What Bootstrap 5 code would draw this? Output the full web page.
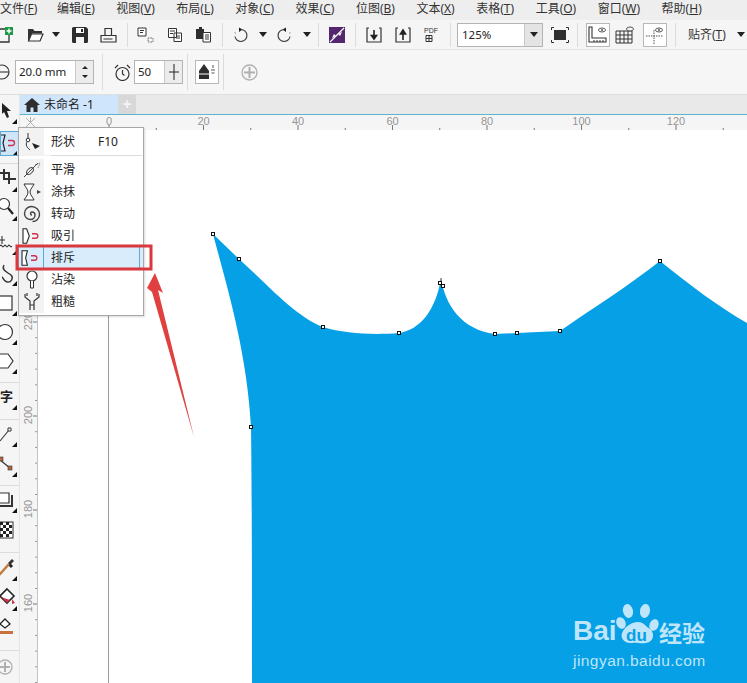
<!DOCTYPE html>
<html lang="zh-CN">
<head>
    <meta charset="UTF-8">
    <title>未命名 -1</title>
    <link href="https://cdn.jsdelivr.net/npm/bootstrap@5.3.0/dist/css/bootstrap.min.css" rel="stylesheet">
    <style>
        html, body { margin: 0; height: 100%; overflow: hidden; }
        body { font-family: "Noto Sans", "Noto Sans CJK SC", sans-serif; color: #222; background: #fff; }
        .app { position: relative; width: 747px; height: 683px; overflow: hidden; }
        .menubar { height: 20px; background: #eeeeee; font-size: 12px; line-height: 18px; gap: 21.5px; padding-left: 0; white-space: nowrap; }
        .menu-item { flex: none; color: #333; }
        .menu-item:first-child { margin-right: -2px; }
        .menu-item u { text-underline-offset: 1px; }
        .bar1 { height: 30px; background: #f5f5f5; border-bottom: 1px solid #e3e3e3; padding-left: 0; }
        .bar2 { height: 45px; background: #f6f6f6; border-bottom: 1px solid #dedede; }
        .ti { width: 29px; height: 24px; flex: none; display: flex; align-items: center; justify-content: center; }
        .ti-new { width: 20px; margin-left: -5px; margin-right: 5px; }
        .ti-open { width: 30px; }
        .tarr { width: 15px; height: 24px; flex: none; display: flex; align-items: center; padding-left: 2px; }
        .tarr-b { padding-left: 4px; }
        .tsep { width: 1px; height: 24px; background: #dcdcdc; margin: 0 3px 0 4px; flex: none; }
        .tsep-tall { height: 36px; }
        .tsep-wide { margin-left: 8px; margin-right: 8px; }
        .combo { width: 86px; height: 24px; border: 1px solid #b4b4b4; background: #fff; font-size: 11.500px; line-height: 22px; padding-left: 4px; margin-left: 3px; margin-right: 8px; position: relative; }
        .combo-btn { position: absolute; right: 0; top: 0; bottom: 0; width: 18px; background: #e4e4e4; border-left: 1px solid #c8c8c8; display: flex; align-items: center; justify-content: center; }
        .boxed { width: 24px; height: 24px; border: 1px solid #b8b8b8; background: #fff; flex: none; display: flex; align-items: center; justify-content: center; }
        .snap { font-size: 12px; margin-left: 9px; width: 49px; white-space: nowrap; color: #333; }
        .field { height: 24px; border: 1px solid #b4b4b4; background: #fff; font-size: 11.500px; line-height: 22px; padding-left: 3px; flex: none; }
        .f-size { width: 79px; margin-left: 5px; position: relative; }
        .f-count { width: 49px; position: relative; margin-left: 3px; }
        .spin { position: absolute; right: 0; top: 0; bottom: 0; width: 18px; background: #ececec; border-left: 1px solid #c8c8c8; display: flex; align-items: center; justify-content: center; }
        .bar2 .circle-ic { margin-left: -6px; flex: none; }
        .plus-ic { margin-left: 14px; flex: none; }
        .stage { height: 588px; }
        .toolbox { width: 20px; flex: none; background: #f5f5f5; border-right: 1px solid #e4e4e4; padding-top: 5px; }
        .tool { height: 29px; width: 19px; flex: none; overflow: hidden; }
        .tool svg { display: block; }
        .tool-on { background: #cfe6f8; outline: 1px solid #5aa9d6; outline-offset: -1px; height: 25px; margin-top: 2px; margin-bottom: 2px; }
        .tool-sep { width: 19px; flex: none; background: linear-gradient(#dcdcdc, #dcdcdc) no-repeat center / 100% 1px; }
        .sp1 { height: 1px; background: none; } .sp2 { height: 2px; background: none; } .sp5 { height: 5px; background: none; }
        .sp7 { height: 7px; } .sp8 { height: 8px; } .sp10 { height: 10px; }
        .work { flex: 1; min-width: 0; }
        .tabs { height: 20px; background: #e9e9e9; border-bottom: 1px solid #5fb3cf; }
        .doc-tab { width: 98px; background: #cfe5fb; font-size: 12px; line-height: 19px; white-space: nowrap; }
        .tab-add { width: 18px; background: #d8d8d8; color: #f4f4f4; font-size: 16px; line-height: 18px; text-align: center; font-weight: 700; }
        .sheet { flex: 1; display: block; }
        .flyout { position: absolute; left: 18px; top: 127px; width: 126px; height: 189px; background: #fff; border: 1px solid #a8a8a8; font-size: 12px; box-shadow: 1px 1px 2px rgba(0,0,0,.15); }
        .fly-row { height: 22px; line-height: 22px; display: flex; align-items: center; background: linear-gradient(90deg, #f2f2f2 25px, #fff 25px); }
        .fly-row .ic { width: 25px; height: 22px; flex: none; display: flex; align-items: center; justify-content: center; }
        .fly-row .lb { padding-left: 7px; color: #222; }
        .fly-row .key { margin-left: 23px; font-family: "Noto Sans", sans-serif; }
        .fly-first { height: 27px; }
        .fly-line { height: 1px; background: #dcdcdc; margin: 0 1px 3px 32px; box-shadow: -32px 0 0 0 #f2f2f2; }
        .fly-hot { background: #d9ecfb; position: relative; }
        .fly-hot .ic { border-right: 1px solid #5aa9d6; }
        .fly-hot::after { content: ""; position: absolute; right: 3px; top: 0; bottom: 0; width: 1px; background: #5aa9d6; }
        .overlay { position: absolute; left: 0; top: 0; pointer-events: none; }
        .wm { font-family: "Liberation Sans", sans-serif; fill: #bfe5fa; }
        .wm-cjk { font-family: "Noto Sans CJK SC", sans-serif; fill: #bfe5fa; font-weight: 700; }
        .rl { font-family: "Liberation Sans", sans-serif; font-size: 11px; fill: #969696; }
    </style>
</head>
<body>
<div class="app d-flex flex-column">
    <svg width="0" height="0" class="position-absolute">
        <symbol id="sheetdoc" viewBox="0 0 16 16"><path d="M1.5 1.5h8v9h-8zM7 6h7.500v8.500H7z" fill="#fff" stroke="#333"/><path d="M3 4h5M3 6.500h3M9 9h4M9 11h4" stroke="#333"/></symbol>
        <symbol id="attract" viewBox="0 0 22 20"><path d="M1 2h4l3 8-3 8H1z" fill="#fff" stroke="#222" stroke-width="1.200"/><path d="M11 7.500h4a2.500 2.500 0 0 1 0 5h-4" fill="none" stroke="#d0304a" stroke-width="1.400"/></symbol>
        <symbol id="repel" viewBox="0 0 22 20"><path d="M1 2h6L5 10l2 8H1z" fill="#fff" stroke="#222" stroke-width="1.200"/><path d="M11 7.500h4a2.500 2.500 0 0 1 0 5h-4" fill="none" stroke="#d0304a" stroke-width="1.400"/></symbol>
        <symbol id="tri" viewBox="0 0 19 24"><path d="M17 19v5h-5z" fill="#111"/></symbol>
    </svg>

    <div class="menubar d-flex flex-none">
        <div class="menu-item">文件(<u>F</u>)</div><div class="menu-item">编辑(<u>E</u>)</div><div class="menu-item">视图(<u>V</u>)</div><div class="menu-item">布局(<u>L</u>)</div><div class="menu-item">对象(<u>C</u>)</div><div class="menu-item">效果(<u>C</u>)</div><div class="menu-item">位图(<u>B</u>)</div><div class="menu-item">文本(<u>X</u>)</div><div class="menu-item">表格(<u>T</u>)</div><div class="menu-item">工具(<u>O</u>)</div><div class="menu-item">窗口(<u>W</u>)</div><div class="menu-item">帮助(<u>H</u>)</div>
    </div>

    <div class="bar1 d-flex align-items-center">
        <div class="ti ti-new"><svg width="18" height="18" viewBox="0 0 18 18"><path d="M9 3H3v13h10V8" fill="none" stroke="#333" stroke-width="1.300"/><rect x="9" y="1" width="8" height="8" fill="#1c9a48"/><path d="M13 2.500v5M10.500 5h5" stroke="#fff" stroke-width="1.400"/></svg></div>
        <div class="ti ti-open"><svg width="17" height="15" viewBox="0 0 17 15"><path d="M1 14V2h5l1.500 2H15v2.500H5L2.500 14z" fill="#333"/><path d="M1.500 14l3-7H16l-3 7z" fill="#fff" stroke="#333" stroke-width="1.200"/></svg></div>
        <div class="tarr"><svg width="8" height="5"><path d="M0 0h8L4 5z" fill="#222"/></svg></div>
        <div class="ti"><svg width="16" height="16" viewBox="0 0 16 16"><path d="M0 1.500A1.500 1.500 0 0 1 1.500 0H14l2 2v12.500a1.500 1.500 0 0 1-1.500 1.500h-13A1.500 1.500 0 0 1 0 14.500z" fill="#2e2e2e"/><path d="M4 1h8v5H4z" fill="#fff"/><path d="M9 2h2v3H9z" fill="#2e2e2e"/><rect x="4" y="10" width="8" height="6" fill="#f5f5f5"/></svg></div>
        <div class="ti"><svg width="17" height="16" viewBox="0 0 17 16"><path d="M5 8V1.500h6.500V8M1 8.500h15v6.500H1zM3.500 12h9" fill="none" stroke="#333" stroke-width="1.200"/></svg></div>
        <div class="tsep"></div>
        <div class="ti"><svg width="17" height="16" viewBox="0 0 17 16"><path d="M1 1h8v8H1z" fill="#fff" stroke="#333"/><path d="M3 3.500h4M3 5.500h3" stroke="#333"/><path d="M11 11h5v4h-5z" fill="none" stroke="#666" stroke-dasharray="1.500 1"/></svg></div>
        <div class="ti"><svg width="16" height="16"><use href="#sheetdoc"/></svg></div>
        <div class="ti"><svg width="17" height="16" viewBox="0 0 17 16"><path d="M1 2h3V0h3v2h2v10H1z" fill="#2e2e2e"/><path d="M8 5.500h7.500v9.500H8z" fill="#fff" stroke="#333"/><path d="M10 8h4M10 10h4M10 12h4" stroke="#333"/></svg></div>
        <div class="tsep"></div>
        <div class="ti"><svg width="17" height="17" viewBox="0 0 17 17"><path d="M7 1.500l3.500 2L7 6z" fill="#222"/><path d="M9 3.500a6 6 0 1 1-6 7" fill="none" stroke="#444" stroke-width="1.200"/><path d="M3 6.500l.500 1" stroke="#444" stroke-dasharray="1 1"/></svg></div>
        <div class="tarr tarr-b"><svg width="8" height="5"><path d="M0 0h8L4 5z" fill="#222"/></svg></div>
        <div class="ti"><svg width="17" height="17" viewBox="0 0 17 17"><path d="M10 1.500l-3.500 2L10 6z" fill="#222"/><path d="M8 3.500a6 6 0 1 0 6 7" fill="none" stroke="#444" stroke-width="1.200"/><path d="M14 6.500l-.500 1" stroke="#444" stroke-dasharray="1 1"/></svg></div>
        <div class="tarr tarr-b"><svg width="8" height="5"><path d="M0 0h8L4 5z" fill="#222"/></svg></div>
        <div class="tsep"></div>
        <div class="ti"><svg width="16" height="16" viewBox="0 0 16 16"><rect width="16" height="16" fill="#54266f"/><path d="M1 15L15 1" stroke="#fff" stroke-width="1.300"/><path d="M9 7l4-2-2 4zM7 9l-4 2 2-4z" fill="#fff"/></svg></div>
        <div class="tsep"></div>
        <div class="ti"><svg width="16" height="16" viewBox="0 0 16 16"><path d="M3 1H1v14h14V1h-2" fill="none" stroke="#333" stroke-width="1.200"/><path d="M8 12V3M8 12L5.500 8.500h5z" stroke="#222" stroke-width="1.600" fill="#222"/></svg></div>
        <div class="ti"><svg width="16" height="16" viewBox="0 0 16 16"><path d="M3 1H1v14h14V1h-2" fill="none" stroke="#333" stroke-width="1.200"/><path d="M8 13V5M8 3L5.500 7h5z" stroke="#222" stroke-width="1.600" fill="#222"/></svg></div>
        <div class="ti"><svg width="18" height="18" viewBox="0 0 18 18"><text x="1" y="7" font-family="Liberation Sans, sans-serif" font-size="7" fill="#333">PDF</text><path d="M3 9.500h6v6H3zM3 12.500h6M6 9.500v6" fill="none" stroke="#333"/></svg></div>
        <div class="tsep"></div>
        <div class="combo">125%<div class="combo-btn"><svg width="8" height="5"><path d="M0 0h8L4 5z" fill="#222"/></svg></div></div>
        <svg width="18" height="16" viewBox="0 0 18 16" class="flex-none"><rect x="3" y="3" width="12" height="10" fill="#2e2e2e"/><path d="M.5 3V.5H3M15 .5h2.500V3M17.500 13v2.500H15M3 15.500H.5V13" fill="none" stroke="#333"/></svg>
        <div class="tsep tsep-wide"></div>
        <div class="boxed"><svg width="20" height="18" viewBox="0 0 20 18"><path d="M1 1h3v11h14v4H1z" fill="none" stroke="#333" stroke-width="1.100"/><path d="M6 14v2M9 14v2M12 14v2M15 14v2" stroke="#333"/><ellipse cx="14" cy="4" rx="3.500" ry="2" fill="none" stroke="#555"/><circle cx="14" cy="4" r="1" fill="#555"/></svg></div>
        <div class="ti"><svg width="20" height="18" viewBox="0 0 20 18"><path d="M1 5h16v12H1zM1 9h16M1 13h16M5 5v12M9 5v12M13 5v12" fill="none" stroke="#333"/><ellipse cx="15" cy="3" rx="3.500" ry="2" fill="#f5f5f5" stroke="#555"/></svg></div>
        <div class="boxed ms-1"><svg width="20" height="18" viewBox="0 0 20 18"><path d="M1 10h17M9 4v14" stroke="#555" stroke-dasharray="1.500 1"/><ellipse cx="14" cy="4" rx="3.500" ry="2" fill="none" stroke="#555"/><circle cx="14" cy="4" r="1" fill="#555"/></svg></div>
        <div class="tsep ms-2"></div>
        <div class="snap">贴齐(<u>T</u>)</div>
        <svg width="8" height="5" class="flex-none"><path d="M0 0h8L4 5z" fill="#222"/></svg>
    </div>

    <div class="bar2 d-flex align-items-center flex-none">
        <svg class="circle-ic" width="16" height="16" viewBox="0 0 16 16"><circle cx="8" cy="8" r="7" fill="none" stroke="#333" stroke-width="1.100"/><path d="M1 8h14" stroke="#333" stroke-width="1.100"/></svg>
        <div class="field f-size">20.0 mm<div class="spin"><svg width="8" height="16" viewBox="0 0 8 16"><path d="M4 2l3 3H1zM4 14l3-3H1z" fill="#222"/></svg></div></div>
        <div class="tsep tsep-tall ms-2"></div>
        <svg class="ms-2 flex-none" width="17" height="17" viewBox="0 0 17 17"><circle cx="8.500" cy="10" r="6.500" fill="none" stroke="#333" stroke-width="1.200"/><path d="M8.500 6v4l2 1.500M1 4l3-3M16 4l-3-3" fill="none" stroke="#333" stroke-width="1.200"/></svg>
        <div class="field f-count">50<div class="spin"><svg width="14" height="18" viewBox="0 0 14 18"><path d="M7 1v16M2 9h10" stroke="#222"/></svg></div></div>
        <div class="tsep tsep-tall ms-1"></div>
        <div class="boxed ms-1"><svg width="20" height="18" viewBox="0 0 20 18"><path d="M7 1l5 7v8H2V8z" fill="#2e2e2e"/><path d="M2 11h10" stroke="#fff"/><path d="M16 2v3M14 7h4M14.500 10h3" stroke="#555"/></svg></div>
        <div class="tsep tsep-tall ms-1"></div>
        <svg class="plus-ic" width="17" height="17" viewBox="0 0 17 17"><circle cx="8.500" cy="8.500" r="7.500" fill="none" stroke="#b0b0b0" stroke-width="1.300"/><path d="M8.500 3v11M3 8.500h11" stroke="#b0b0b0" stroke-width="2"/></svg>
    </div>

    <div class="stage d-flex">
        <div class="toolbox d-flex flex-column">
            <div class="tool"><svg width="19" height="24" viewBox="0 0 19 24"><path d="M2 3l9 8H7l2 6-2 1-3-6-2 2z" fill="#222"/><use href="#tri" width="19" height="24"/></svg></div>
            <div class="tool tool-on"><svg width="19" height="25" viewBox="0 0 19 25"><path d="M0 4h5l-2 8 2 8H0" fill="none" stroke="#222" stroke-width="1.200"/><path d="M8 9.500h4a2.500 2.500 0 0 1 0 5H8" fill="none" stroke="#d0304a" stroke-width="1.300"/><path d="M17 20v5h-5z" fill="#111"/></svg></div>
            <div class="tool-sep sp10"></div>
            <div class="tool"><svg width="19" height="24" viewBox="0 0 19 24"><path d="M0 5h9v11M4 1v4M4 5v6h9M13 11h3" fill="none" stroke="#333" stroke-width="2"/><use href="#tri" width="19" height="24"/></svg></div>
            <div class="tool"><svg width="19" height="24" viewBox="0 0 19 24"><circle cx="4" cy="7" r="5.500" fill="#fff" stroke="#333" stroke-width="1.200"/><path d="M8 11l5 6" stroke="#222" stroke-width="2.200"/><use href="#tri" width="19" height="24"/></svg></div>
            <div class="tool-sep sp5"></div>
            <div class="tool"><svg width="19" height="24" viewBox="0 0 19 24"><path d="M2 5v8M-1 9h6M0 15c2-3 2 3 4 0s2 3 4 0 2 3 4 0" fill="none" stroke="#333" stroke-width="1.100"/><use href="#tri" width="19" height="24"/></svg></div>
            <div class="tool-sep sp2"></div>
            <div class="tool"><svg width="19" height="24" viewBox="0 0 19 24"><path d="M4 3c-3 5 3 7 7 10 3 3 0 8-4 7s-4-5-5-5" fill="none" stroke="#333" stroke-width="1.400"/><use href="#tri" width="19" height="24"/></svg></div>
            <div class="tool-sep sp1"></div>
            <div class="tool"><svg width="19" height="24" viewBox="0 0 19 24"><rect x="-3" y="4" width="15" height="14" fill="#fff" stroke="#333" stroke-width="1.200"/><use href="#tri" width="19" height="24"/></svg></div>
            <div class="tool"><svg width="19" height="24" viewBox="0 0 19 24"><circle cx="5" cy="11" r="7.500" fill="#fff" stroke="#333" stroke-width="1.200"/><use href="#tri" width="19" height="24"/></svg></div>
            <div class="tool"><svg width="19" height="24" viewBox="0 0 19 24"><path d="M-1 4h9l5 7-5 7h-9l-4-7z" fill="#fff" stroke="#333" stroke-width="1.200"/><use href="#tri" width="19" height="24"/></svg></div>
            <div class="tool-sep sp7"></div>
            <div class="tool"><svg width="19" height="24" viewBox="0 0 19 24"><text x="0" y="15" font-family="Noto Sans CJK SC, sans-serif" font-weight="700" font-size="13" fill="#222">字</text><use href="#tri" width="19" height="24"/></svg></div>
            <div class="tool-sep sp8"></div>
            <div class="tool"><svg width="19" height="24" viewBox="0 0 19 24"><path d="M0 18L9 7" stroke="#333" stroke-width="1.100"/><path d="M8 5h3v3H8z" fill="#fff" stroke="#333"/><use href="#tri" width="19" height="24"/></svg></div>
            <div class="tool-sep sp1"></div>
            <div class="tool"><svg width="19" height="24" viewBox="0 0 19 24"><path d="M0 7l10 8" stroke="#333" stroke-width="1.200"/><rect x="-1" y="4" width="4" height="4" fill="#b5653f" stroke="#333" stroke-width=".6"/><rect x="8" y="13" width="4" height="4" fill="#b5653f" stroke="#333" stroke-width=".6"/><use href="#tri" width="19" height="24"/></svg></div>
            <div class="tool-sep sp7"></div>
            <div class="tool"><svg width="19" height="24" viewBox="0 0 19 24"><path d="M-2 4h11v10H-2z" fill="#fff" stroke="#333" stroke-width="1.200"/><path d="M12 6v11H0" fill="none" stroke="#333" stroke-width="2"/><use href="#tri" width="19" height="24"/></svg></div>
            <div class="tool"><svg width="19" height="24" viewBox="0 0 19 24"><rect x="0" y="4" width="13" height="16" fill="#fff" stroke="#333"/><path d="M0 4h3v3H0zM6 4h3v3H6zM3 7h3v3H3zM9 7h3v3H9zM0 10h3v3H0zM6 10h3v3H6zM3 13h3v3H3zM9 13h3v3H9zM0 16h3v3H0zM6 16h3v3H6z" fill="#222"/></svg></div>
            <div class="tool-sep sp10"></div>
            <div class="tool"><svg width="19" height="24" viewBox="0 0 19 24"><path d="M9 7l3 3" stroke="#222" stroke-width="3"/><path d="M9 7l-8 9-2 2" stroke="#c47a3a" stroke-width="2.500"/><path d="M8 6l4-4 2 2-4 4z" fill="#333"/><use href="#tri" width="19" height="24"/></svg></div>
            <div class="tool-sep sp1"></div>
            <div class="tool"><svg width="19" height="24" viewBox="0 0 19 24"><path d="M7 2l7 7-7 7-7-7z" fill="#fff" stroke="#222" stroke-width="1.600"/><path d="M1 10l6 6 3-3z" fill="#c8334a"/><path d="M12 12l3 4-3 1z" fill="#c8334a"/><use href="#tri" width="19" height="24"/></svg></div>
            <div class="tool"><svg width="19" height="24" viewBox="0 0 19 24"><path d="M5 3l5 5-5 4-5-4z" fill="#fff" stroke="#222" stroke-width="1.300"/><rect x="-2" y="15" width="15" height="3" fill="#c9713e"/></svg></div>
            <div class="tool-sep sp10"></div>
            <div class="tool"><svg width="19" height="24" viewBox="0 0 19 24"><circle cx="5" cy="12" r="7" fill="none" stroke="#b0b0b0" stroke-width="1.300"/><path d="M5 7v10M0 12h10" stroke="#b0b0b0" stroke-width="2"/></svg></div>
        </div>

        <div class="work d-flex flex-column">
            <div class="tabs d-flex flex-none">
                <div class="doc-tab d-flex align-items-center">
                    <svg class="mx-1" width="16" height="14" viewBox="0 0 16 14"><path d="M8 0L0 7h2.500v7h4V9.500h3V14h4V7H16z" fill="#2e2e2e"/></svg>
                    <span>未命名 -1</span>
                </div>
                <div class="tab-add">+</div>
            </div>
            <svg class="sheet" id="sheet" width="727" height="568" viewBox="20 115 727 568">
                <rect x="20" y="115" width="727" height="568" fill="#fff"/>
                <path d="M213 234L239 259C270 287 295 316 323 327C345 334 375 335 399 333C420 330 436 310 441 278C445 305 462 330 495 334L517 333L560 331C590 310 630 285 660 261C690 285 720 308 747 323V683H252C252 600 252 500 251 427C247 350 225 280 213 234Z" fill="#05a0e6"/>
                <path d="M441 278v8" stroke="#555"/>
                <g id="nodes" fill="#fff" stroke="#111"></g>
                <g id="rulers"></g>
                <g>
                    <text class="wm" x="573" y="640" font-size="28" font-weight="700">Bai</text>
                    <ellipse cx="628" cy="611" rx="5" ry="7" fill="#bfe5fa" transform="rotate(-15 628 611)"/>
                    <ellipse cx="645" cy="611" rx="5" ry="7" fill="#bfe5fa" transform="rotate(10 645 611)"/>
                    <ellipse cx="621" cy="623" rx="4.500" ry="6" fill="#bfe5fa" transform="rotate(-25 621 623)"/>
                    <ellipse cx="654" cy="625" rx="4.500" ry="6" fill="#bfe5fa" transform="rotate(20 654 625)"/>
                    <path d="M638 622c6 0 7 4 12 7 5 4 4 13-4 14-6 1-10-1-14 0-8 1-13-6-9-12 3-5 9-9 15-9z" fill="#bfe5fa"/>
                    <text x="626" y="641" font-family="Liberation Sans, sans-serif" font-weight="700" font-size="17" fill="#05a0e6">du</text>
                    <text class="wm-cjk" x="659" y="642" font-size="23">经验</text>
                    <text class="wm" x="573" y="666" font-size="15.500" letter-spacing=".45">jingyan.baidu.com</text>
                </g>
            </svg>
        </div>
    </div>

    <div class="flyout">
        <div class="fly-row fly-first">
            <div class="ic"><svg width="20" height="20" viewBox="0 0 20 20"><path d="M6 1v6M6 9c-3 2-2 6 2 9" fill="none" stroke="#333"/><circle cx="6" cy="8" r="1.800" fill="#fff" stroke="#333"/><path d="M10 11l8 3-5 3z" fill="#222"/></svg></div>
            <div class="lb">形状</div><div class="key">F10</div>
        </div>
        <div class="fly-line"></div>
        <div class="fly-row">
            <div class="ic"><svg width="20" height="20" viewBox="0 0 20 20"><path d="M2 17L16 3" stroke="#444"/><ellipse cx="8" cy="11" rx="4" ry="2.500" fill="none" stroke="#444" transform="rotate(-45 8 11)"/><path d="M13 5l5-2-2 5" fill="none" stroke="#666" stroke-dasharray="1 1"/></svg></div>
            <div class="lb">平滑</div>
        </div>
        <div class="fly-row">
            <div class="ic"><svg width="20" height="20" viewBox="0 0 20 20"><path d="M2 2h10c-1 3-4 5-4 8s3 5 4 8H2c2-3 4-5 4-8S3 5 2 2z" fill="#fff" stroke="#333"/><path d="M15 8l4 2-4 2z" fill="#444"/></svg></div>
            <div class="lb">涂抹</div>
        </div>
        <div class="fly-row">
            <div class="ic"><svg width="18" height="18" viewBox="0 0 18 18"><path d="M9 10a1.500 1.500 0 0 1 0-3 3 3 0 0 1 3 3 4.500 4.500 0 0 1-4.500 4.500A6 6 0 0 1 1.500 8.500 7 7 0 0 1 8.500 1.500 8 8 0 0 1 16.500 9.500 7 7 0 0 1 9.500 16.500" fill="none" stroke="#444" stroke-width="1.400"/></svg></div>
            <div class="lb">转动</div>
        </div>
        <div class="fly-row">
            <div class="ic"><svg width="20" height="18"><use href="#attract"/></svg></div>
            <div class="lb">吸引</div>
        </div>
        <div class="fly-row fly-hot">
            <div class="ic"><svg width="20" height="18"><use href="#repel"/></svg></div>
            <div class="lb">排斥</div>
        </div>
        <div class="fly-row">
            <div class="ic"><svg width="14" height="20" viewBox="0 0 14 20"><circle cx="7" cy="6" r="5" fill="#fff" stroke="#333" stroke-width="1.200"/><path d="M5.500 11v7h3v-7" fill="#fff" stroke="#333"/></svg></div>
            <div class="lb">沾染</div>
        </div>
        <div class="fly-row">
            <div class="ic"><svg width="16" height="20" viewBox="0 0 16 20"><path d="M1 2v3l5 4v9M15 2v3l-5 4v9M6 13h4M3 1v3M13 1v3" fill="none" stroke="#333" stroke-width="1.200"/></svg></div>
            <div class="lb">粗糙</div>
        </div>
    </div>

    <svg class="overlay" width="747" height="683" viewBox="0 0 747 683">
        <rect x="17" y="246" width="134" height="23" fill="none" stroke="#d8383e" stroke-width="3"/>
        <path d="M155 273L163 293L158 290L194 437L152 292L147 288Z" fill="#e0403f"/>
    </svg>
</div>
<script>
    const NS = 'http://www.w3.org/2000/svg';
    const rulers = document.getElementById('rulers');
    const nodes = document.getElementById('nodes');

    function add(parent, tag, attrs, text) {
        const el = document.createElementNS(NS, tag);
        Object.keys(attrs).forEach(k => el.setAttribute(k, attrs[k]));
        if (text !== undefined) el.textContent = text;
        parent.appendChild(el);
        return el;
    }

    // selection handles on the curve
    [[213, 234], [239, 259], [323, 327], [399, 333], [440, 283], [443, 286], [495, 334], [517, 333], [560, 331], [660, 261], [251, 427]].forEach(p => {
        add(nodes, 'rect', { x: p[0] - 1.5, y: p[1] - 1.5, width: 3, height: 3 });
    });

    // ruler backgrounds
    add(rulers, 'rect', { x: 20, y: 115, width: 727, height: 15, fill: '#f5f5f5' });
    add(rulers, 'rect', { x: 20, y: 130, width: 18, height: 553, fill: '#f5f5f5' });
    add(rulers, 'path', { d: 'M37.500 130V683', stroke: '#c4c4c4', fill: 'none' });
    add(rulers, 'path', { d: 'M108.500 130V683', stroke: '#9a9a9a', fill: 'none' });
    add(rulers, 'path', { d: 'M26 118l9 9M35 118l-9 9M30.500 117v5', stroke: '#b0b0b0', fill: 'none' });

    // horizontal: 4.725px per unit, 0 at x=109
    for (let v = 0; v <= 130; v += 10) {
        const x = 109 + v * 4.725;
        const major = v % 20 === 0;
        add(rulers, 'path', { d: `M${x} ${major ? 125 : 128}V130`, stroke: '#777', fill: 'none' });
        if (major) add(rulers, 'text', { class: 'rl', x: x, y: 125, 'text-anchor': 'middle' }, v);
    }
    // vertical: the values fall as the sheet goes down
    for (let v = 240; v >= 160; v -= 20) {
        const y = 416 + (200 - v) * 4.7;
        add(rulers, 'path', { d: `M33 ${y}H37`, stroke: '#777', fill: 'none' });
        add(rulers, 'text', { class: 'rl', x: 0, y: 0, 'text-anchor': 'middle', transform: `translate(32 ${y - 1}) rotate(-90)` }, v);
        for (let i = 1; i < 6; i++) {
            add(rulers, 'path', { d: `M35 ${y + i * 15.7}h2`, stroke: '#999', fill: 'none' });
        }
    }
</script>
</body>
</html>
